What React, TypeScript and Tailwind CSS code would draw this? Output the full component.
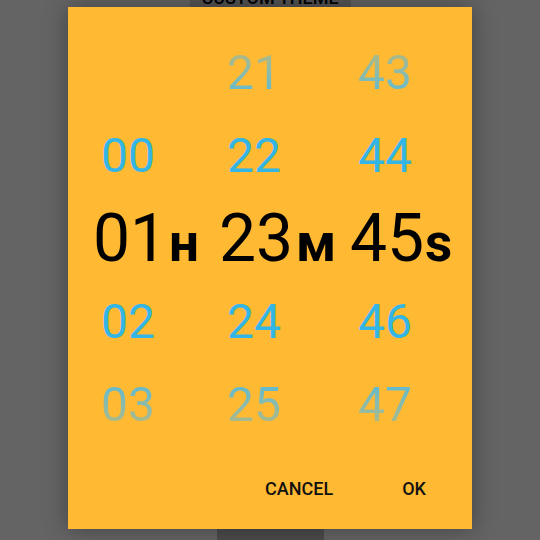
const rows = [
  { h: "", m: "21", s: "43", fade: "top" },
  { h: "00", m: "22", s: "44", fade: "" },
  { h: "02", m: "24", s: "46", fade: "" },
  { h: "03", m: "25", s: "47", fade: "bottom" },
];

function Cell({ value, fade }: { value: string; fade: string }) {
  const tone =
    fade === "top"
      ? "bg-gradient-to-b from-[#b4b879] to-[#52bad8] bg-clip-text text-transparent"
      : fade === "bottom"
        ? "bg-gradient-to-b from-[#52bad8] to-[#b4b879] bg-clip-text text-transparent"
        : "text-[#33b5e5]";
  return (
    <div className="w-[70px] flex justify-center">
      <span className={`text-[48px] leading-none ${tone}`}>{value}</span>
    </div>
  );
}

function Row({ h, m, s, fade }: { h: string; m: string; s: string; fade: string }) {
  return (
    <div className="h-[83px] flex items-center">
      <Cell value={h} fade={fade} />
      <div className="w-[56px]" />
      <Cell value={m} fade={fade} />
      <div className="w-[61px]" />
      <Cell value={s} fade={fade} />
    </div>
  );
}

function Selected() {
  const num = "w-[70px] text-center text-[66px] leading-none text-black";
  const unit = "text-[53px] leading-none font-bold text-black";
  return (
    <div className="h-[83px] flex items-center">
      <div className="flex items-baseline">
        <span className={num}>01</span>
        <span className={`${unit} w-[56px] pl-[6px]`}>н</span>
        <span className={num}>23</span>
        <span className={`${unit} w-[61px] pl-[7px]`}>м</span>
        <span className={num}>45</span>
        <span className={`${unit} pl-[5px]`}>s</span>
      </div>
    </div>
  );
}

export default function App() {
  return (
    <div className="relative w-[540px] h-[540px] overflow-hidden bg-[#646464] font-['Roboto',sans-serif]">
      <div className="h-full flex flex-col items-center justify-between">
        <div className="-mt-[14px] h-[23px] w-[161px] bg-[#555555] flex items-center justify-center text-[18px] font-medium text-black">
          CUSTOM THEME
        </div>
        <div className="h-[40px] w-[107px] -mb-[28px] bg-[#4b4b4b]" />
      </div>

      <div className="absolute left-[68px] top-[7px] w-[404px] h-[522px] bg-[#ffb933] shadow-[0_0_22px_rgba(0,0,0,0.35)] flex flex-col">
        <div className="pt-[24px] pl-[25px]">
          <Row {...rows[0]} />
          <Row {...rows[1]} />
          <Selected />
          <Row {...rows[2]} />
          <Row {...rows[3]} />
        </div>
        <div className="mt-[18px] h-[48px] flex items-center justify-end pr-[46px] gap-[69px] text-[18px] font-medium text-[#111111]">
          <span>CANCEL</span>
          <span>OK</span>
        </div>
      </div>
    </div>
  );
}
